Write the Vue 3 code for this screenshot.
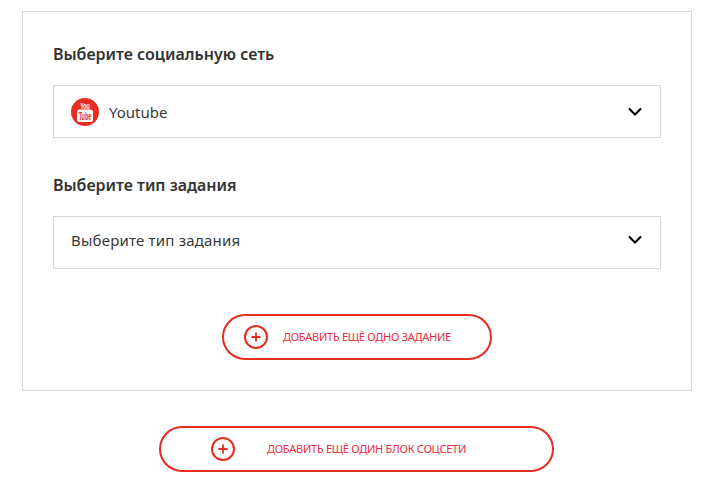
<template>
  <div class="page">
    <div class="card">
      <h3 class="title">Выберите социальную сеть</h3>
      <div class="select">
        <div class="select-value">
          <svg class="yt" width="28" height="28" viewBox="0 0 28 28">
            <circle cx="14" cy="14" r="14" fill="#e62d20" />
            <text class="yt-you" transform="translate(14 10.6) scale(.76 1.29)" text-anchor="middle">You</text>
            <rect x="6" y="11.5" width="16" height="12.5" rx="2.5" fill="#fff" />
            <text class="yt-tube" transform="translate(14 21.8) scale(.78 1.43)" text-anchor="middle">Tube</text>
          </svg>
          <span>Youtube</span>
        </div>
        <svg class="arrow" width="14" height="9" viewBox="0 0 14 9">
          <path d="M1 1.5l6 6 6-6" fill="none" stroke="#000" stroke-width="2" />
        </svg>
      </div>

      <h3 class="title second">Выберите тип задания</h3>
      <div class="select raised">
        <div class="select-value">
          <span class="placeholder">Выберите тип задания</span>
        </div>
        <svg class="arrow" width="14" height="9" viewBox="0 0 14 9">
          <path d="M1 1.5l6 6 6-6" fill="none" stroke="#000" stroke-width="2" />
        </svg>
      </div>

      <button type="button" class="add-btn task-btn">
        <span class="plus">
          <svg width="10" height="10" viewBox="0 0 10 10">
            <path d="M5 .5v9M.5 5h9" stroke="#e62d20" stroke-width="1.8" />
          </svg>
        </span>
        <span class="add-label">ДОБАВИТЬ ЕЩЁ ОДНО ЗАДАНИЕ</span>
      </button>
    </div>

    <button type="button" class="add-btn block-btn">
      <span class="plus">
        <svg width="10" height="10" viewBox="0 0 10 10">
          <path d="M5 .5v9M.5 5h9" stroke="#e62d20" stroke-width="1.8" />
        </svg>
      </span>
      <span class="add-label">ДОБАВИТЬ ЕЩЁ ОДИН БЛОК СОЦСЕТИ</span>
    </button>
  </div>
</template>

<script setup>
</script>

<style>
html,
body {
  background: #fff;
}
</style>

<style scoped>
.page {
  width: 705px;
  height: 496px;
  padding: 11px 13px 0 22px;
  box-sizing: border-box;
  font-family: "Noto Sans", sans-serif;
  display: flex;
  flex-direction: column;
  overflow: hidden;
}

.card {
  border: 1px solid #d8d8d8;
  padding: 31px 30px 30px;
  height: 380px;
  box-sizing: border-box;
  display: flex;
  flex-direction: column;
}

.title {
  margin: 0 0 20px;
  font-size: 16px;
  line-height: 22px;
  font-weight: 600;
  color: #333;
}

.second {
  margin-top: 36px;
  margin-bottom: 20px;
}

.select {
  height: 53px;
  border: 1px solid #d8d8d8;
  box-sizing: border-box;
  display: flex;
  align-items: center;
  justify-content: space-between;
  padding: 0 18px 0 17px;
}

.raised {
  padding-bottom: 6px;
}

.select-value {
  display: flex;
  align-items: center;
  gap: 10px;
  font-size: 15px;
  color: #3a3a3a;
}

.placeholder {
  letter-spacing: 0.2px;
}

.yt-you,
.yt-tube {
  font-family: "Liberation Sans", sans-serif;
  font-size: 7px;
  font-weight: 700;
}

.yt-you {
  fill: #fff;
}

.yt-tube {
  fill: #e62d20;
}

.add-btn {
  height: 46px;
  border: 2px solid #e62d20;
  border-radius: 23px;
  background: #fff;
  box-sizing: border-box;
  display: flex;
  align-items: center;
  padding: 0;
  font-family: inherit;
}

.task-btn {
  width: 270px;
  margin: 45px auto 0;
  padding-left: 20px;
  gap: 15px;
}

.block-btn {
  width: 395px;
  margin: 35px 0 0 137px;
  padding-left: 50px;
  gap: 32px;
}

.plus {
  width: 24px;
  height: 24px;
  border: 2px solid #e62d20;
  border-radius: 50%;
  box-sizing: border-box;
  display: flex;
  align-items: center;
  justify-content: center;
  flex-shrink: 0;
}

.plus svg {
  display: block;
}

.add-label {
  font-size: 11px;
  letter-spacing: -0.26px;
  color: #e62d40;
  white-space: nowrap;
  margin-top: -2px;
}
</style>
